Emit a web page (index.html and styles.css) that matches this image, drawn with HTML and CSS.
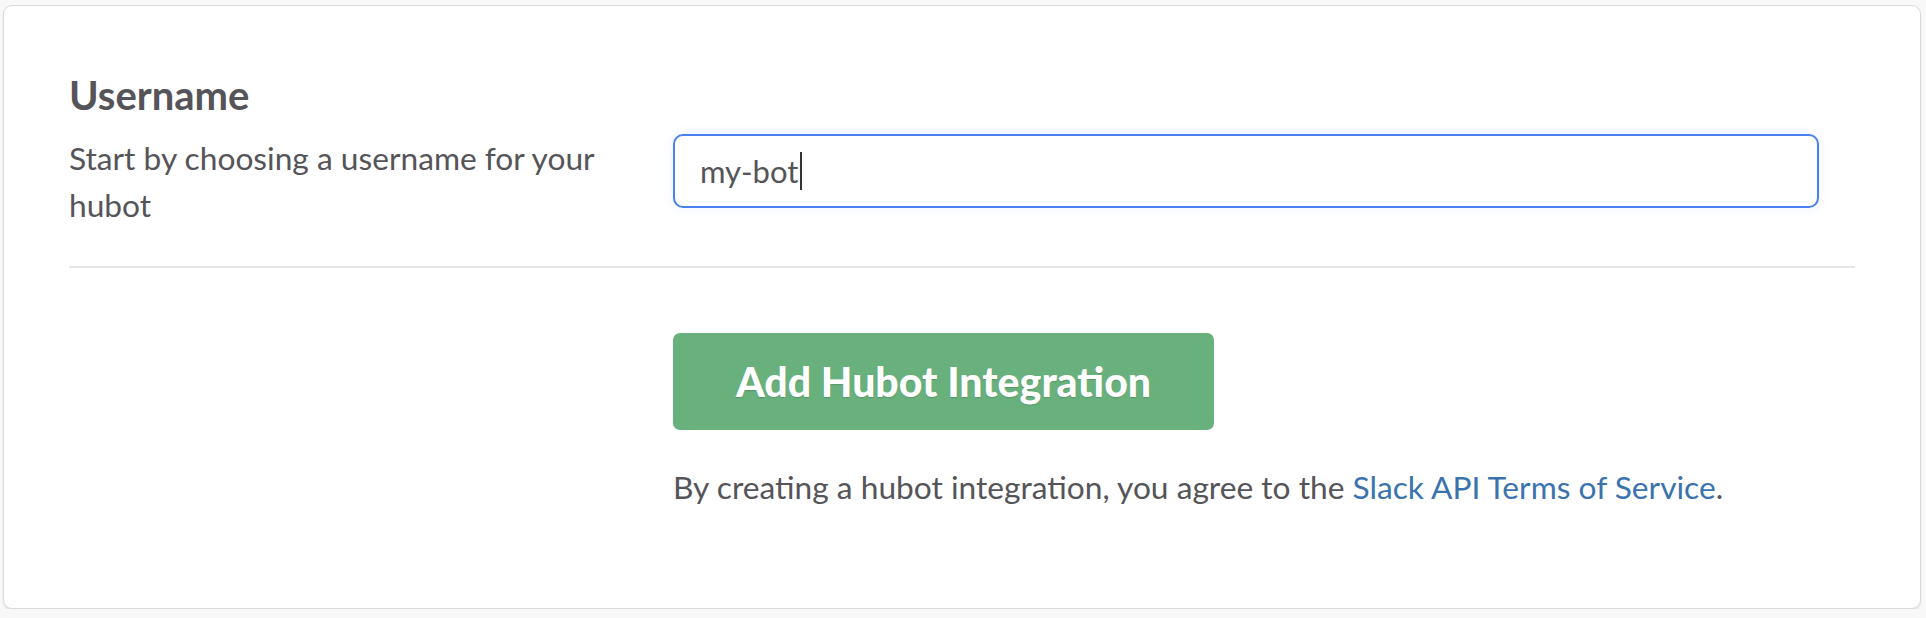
FILE: index.html
```html
<!DOCTYPE html>
<html>
<head>
<meta charset="utf-8">
<link rel="stylesheet" href="styles.css">
</head>
<body>
<div class="card">
  <div class="row">
    <div class="label-col">
      <h2 class="heading">Username</h2>
      <p class="desc">Start by choosing a username for your hubot</p>
    </div>
    <div class="input-col">
      <div class="input">my-bot<span class="caret"></span></div>
    </div>
  </div>
  <div class="sep"></div>
  <div class="actions">
    <button class="btn">Add Hubot Integration</button>
    <p class="terms">By creating a hubot integration, you agree to the <a class="link" href="#">Slack API Terms of Service</a>.</p>
  </div>
</div>
</body>
</html>
```
FILE: styles.css
```css
html, body {
  margin: 0;
  padding: 0;
  background: #f8f8f8;
  font-family: Lato, "Noto Sans", sans-serif;
  color: #555459;
}
.card {
  margin: 5px 5px 0 3px;
  height: 604px;
  box-sizing: border-box;
  background: #fff;
  border: 1px solid #d9d9d9;
  border-radius: 9px;
  box-shadow: 0 2px 2px rgba(0,0,0,0.08);
  padding: 65px 65px 0 65px;
}
.row {
  display: flex;
  padding-bottom: 37px;
}
.label-col {
  width: 604px;
  flex: none;
}
.heading {
  margin: 0 0 16px 0;
  font-size: 40px;
  line-height: 48px;
  font-weight: 700;
}
.desc {
  margin: 0;
  font-size: 31.7px;
  line-height: 47px;
  width: 560px;
}
.input-col {
  flex: 1;
  padding-right: 36px;
  padding-top: 63px;
}
.input {
  height: 74px;
  box-sizing: border-box;
  border: 2px solid #4a80f0;
  border-radius: 10px;
  box-shadow: 0 0 8px 2px rgba(74,128,240,0.08);
  padding: 0 0 0 25px;
  font-size: 31px;
  line-height: 70px;
  color: #555459;
  display: flex;
  align-items: center;
}
.caret {
  display: inline-block;
  width: 2px;
  height: 38px;
  background: #333;
  margin-left: 2px;
}
.sep {
  height: 2px;
  background: #e6e6e6;
}
.actions {
  padding-left: 604px;
  padding-top: 65px;
}
.btn {
  display: block;
  width: 541px;
  height: 97px;
  border: 0;
  border-radius: 7px;
  background: #68b07c;
  color: #fff;
  font-family: Lato, "Noto Sans", sans-serif;
  font-weight: 900;
  font-size: 41px;
  text-shadow: 0 1px 1px rgba(0,0,0,0.15);
  padding: 0;
}
.terms {
  margin: 34px 0 0 0;
  font-size: 31.7px;
  line-height: 46px;
}
.link {
  color: #3b73af;
  text-decoration: none;
}
```
